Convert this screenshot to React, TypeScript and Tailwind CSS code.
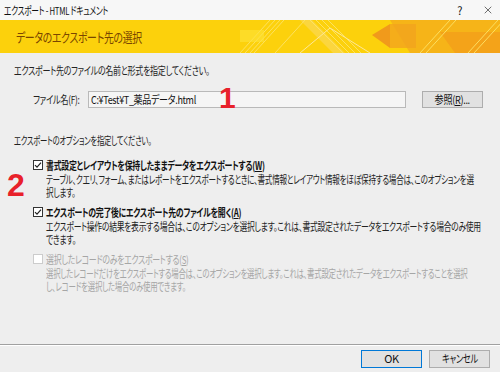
import { X } from "lucide-react";

const jp = "font-['Meiryo_UI','Noto_Sans_CJK_JP',sans-serif] [font-feature-settings:'palt']";

// Meiryo UI is much narrower than Noto, so squeeze text horizontally
function T({ children, className = "" }: { children: React.ReactNode; className?: string }) {
  return (
    <span className={`block origin-left whitespace-nowrap leading-[13px] ${className || "scale-x-[0.72]"}`}>
      {children}
    </span>
  );
}

function Check({ checked, disabled }: { checked?: boolean; disabled?: boolean }) {
  return (
    <span
      className={`flex h-[10px] w-[10px] shrink-0 items-center justify-center border bg-white ${
        disabled ? "border-[#cccccc]" : "border-[#333333]"
      }`}
    >
      {checked && (
        <svg width="8" height="8" viewBox="0 0 8 8">
          <path d="M1 4.2 L3 6.2 L7 1.6" fill="none" stroke="#222" strokeWidth="1.2" />
        </svg>
      )}
    </span>
  );
}

function Option({
  label,
  keyChar,
  lines,
  checked,
  disabled,
  squeeze,
}: {
  label: string;
  keyChar: string;
  lines: string[];
  checked?: boolean;
  disabled?: boolean;
  squeeze: string;
}) {
  return (
    <div className="flex flex-col">
      <div className="flex h-[14px] items-center gap-[3px] pl-[33px]">
        <Check checked={checked} disabled={disabled} />
        <div className={`min-w-0 flex-1 ${disabled ? "text-[#a6a6a6]" : "font-bold text-[#111]"}`}>
          <T>
            {label}(<span className="underline">{keyChar}</span>)
          </T>
        </div>
      </div>
      <div className={`mt-[1px] flex flex-col pl-[46px] ${disabled ? "text-[#a6a6a6]" : "text-[#222]"}`}>
        {lines.map((l) => (
          <div key={l} className="flex h-[13px] items-center overflow-visible">
            <T className={squeeze}>{l}</T>
          </div>
        ))}
      </div>
    </div>
  );
}

function BannerArt() {
  return (
    <svg className="absolute right-0 top-0" width="260" height="33" viewBox="0 0 260 33">
      <polygon points="150,0 260,0 260,33 170,33" fill="#f6b418" />
      <polygon points="200,12 260,12 260,33 215,33" fill="#f39b1a" opacity="0.7" />
      <polygon points="132,15 150,4 150,28" fill="#f19a1b" />
      <polygon points="150,4 176,4 176,28 150,28" fill="#f3a41e" opacity="0.8" />
      <polygon points="60,0 72,0 105,33 93,33" fill="#fbd63e" />
      <g stroke="#fde46a" strokeWidth="1" opacity="0.9">
        <line x1="0" y1="33" x2="30" y2="0" />
        <line x1="5" y1="33" x2="35" y2="0" />
        <line x1="10" y1="33" x2="40" y2="0" />
        <line x1="14" y1="33" x2="44" y2="0" />
        <line x1="35" y1="33" x2="65" y2="0" />
        <line x1="70" y1="0" x2="103" y2="33" />
        <line x1="76" y1="0" x2="109" y2="33" />
        <line x1="82" y1="0" x2="115" y2="33" />
        <line x1="88" y1="0" x2="121" y2="33" />
        <line x1="180" y1="33" x2="210" y2="0" />
        <line x1="186" y1="33" x2="216" y2="0" />
        <line x1="228" y1="33" x2="258" y2="0" />
        <line x1="234" y1="33" x2="264" y2="0" />
      </g>
      <polyline points="60,33 90,8 130,33" fill="none" stroke="#fde79a" strokeWidth="1" />
      <rect x="0" y="10" width="24" height="12" fill="#fde23a" opacity="0.6" />
    </svg>
  );
}

export default function App() {
  return (
    <div className={`flex h-[372px] w-[500px] flex-col overflow-hidden bg-[#eeeeee] text-[11px] tracking-[-0.4px] ${jp}`}>
      {/* title bar */}
      <div className="flex h-[20px] items-center justify-between bg-[#f7f7f7] pl-[4px] pr-[6px] text-[#111]">
        <T className="scale-x-[0.7]">エクスポート - HTML ドキュメント</T>
        <div className="flex items-center gap-[20px]">
          <span className="text-[11px]">?</span>
          <X size={12} strokeWidth={1.2} />
        </div>
      </div>

      {/* banner */}
      <div className="relative flex h-[33px] items-center overflow-hidden bg-[#fcd10c] pl-[16px]">
        <BannerArt />
        <div className="relative text-[13px] text-[#7a4600]">
          <T className="scale-x-[0.76]">データのエクスポート先の選択</T>
        </div>
      </div>

      {/* body */}
      <div className="flex flex-1 flex-col">
        <div className="mt-[11px] pl-[14px] text-[#222]">
          <T className="scale-x-[0.73]">エクスポート先のファイルの名前と形式を指定してください。</T>
        </div>

        <div className="relative mt-[14px] flex items-center pl-[33px]">
          <div className="w-[55px] text-[#222]">
            <T className="scale-x-[0.75]">ファイル名(F):</T>
          </div>
          <div className="flex h-[17px] w-[318px] items-center border border-[#b9b9b9] bg-[#f5f5f5] pl-[2px] text-[#111]">
            <T className="scale-x-[0.82]">C:¥Test¥T_薬品データ.html</T>
          </div>
          <button className="ml-[16px] flex h-[17px] w-[61px] items-center justify-center border border-[#adadad] bg-[#e1e1e1] text-[#111]">
            <span className="inline-block scale-x-[0.83] whitespace-nowrap">
              参照(<span className="underline">R</span>)...
            </span>
          </button>
          <span className="absolute left-[219px] top-[-8px] font-['Liberation_Sans',sans-serif] text-[30px] font-bold leading-none text-[#e8212a]">
            1
          </span>
        </div>

        <div className="mt-[26px] pl-[14px] text-[#222]">
          <T className="scale-x-[0.67]">エクスポートのオプションを指定してください。</T>
        </div>

        <div className="relative mt-[11px] flex flex-col gap-[6px]">
          <span className="absolute left-[7px] top-[11px] font-['Liberation_Sans',sans-serif] text-[32px] font-bold leading-none text-[#e8212a]">
            2
          </span>
          <Option
            checked
            squeeze="scale-x-[0.69]"
            label="書式設定とレイアウトを保持したままデータをエクスポートする"
            keyChar="W"
            lines={[
              "テーブル、クエリ、フォーム、またはレポートをエクスポートするときに、書式情報とレイアウト情報をほぼ保持する場合は、このオプションを選",
              "択します。",
            ]}
          />
          <Option
            checked
            squeeze="scale-x-[0.71]"
            label="エクスポートの完了後にエクスポート先のファイルを開く"
            keyChar="A"
            lines={[
              "エクスポート操作の結果を表示する場合は、このオプションを選択します。これは、書式設定されたデータをエクスポートする場合のみ使用",
              "できます。",
            ]}
          />
          <Option
            disabled
            squeeze="scale-x-[0.675]"
            label="選択したレコードのみをエクスポートする"
            keyChar="S"
            lines={[
              "選択したレコードだけをエクスポートする場合は、このオプションを選択します。これは、書式設定されたデータをエクスポートすることを選択",
              "し、レコードを選択した場合のみ使用できます。",
            ]}
          />
        </div>

        <div className="mt-auto border-t border-[#a0a0a0] shadow-[0_1px_0_#ffffff]" />
        <div className="flex h-[27px] items-center justify-end gap-[7px] pr-[10px] text-[#111]">
          <button className="flex h-[18px] w-[61px] items-center justify-center border border-[#0078d7] bg-[#e1e1e1]">
            OK
          </button>
          <button className="flex h-[18px] w-[61px] items-center justify-center border border-[#adadad] bg-[#e1e1e1]">
            <span className="inline-block scale-x-[0.75] whitespace-nowrap">キャンセル</span>
          </button>
        </div>
      </div>
    </div>
  );
}
